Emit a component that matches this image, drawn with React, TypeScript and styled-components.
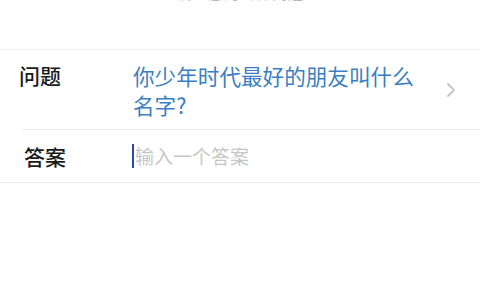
import styled, { createGlobalStyle } from 'styled-components';

const GlobalStyle = createGlobalStyle`
  html, body {
    margin: 0;
    padding: 0;
    background: #ffffff;
    font-family: 'Noto Sans CJK SC', 'Noto Sans', sans-serif;
  }
`;

export default function App() {
  return (
    <Page>
      <GlobalStyle />
      <Header>
        <HeaderText>设置您的密保问题</HeaderText>
      </Header>

      <Form>
        <QuestionRow>
          <Label $indent={19}>问题</Label>
          <QuestionText>你少年时代最好的朋友叫什么名字?</QuestionText>
          <Chevron viewBox="0 0 10 16" width="10" height="16">
            <path d="M2 2 L8 8 L2 14" fill="none" stroke="#c4c4c8" strokeWidth="1.8" strokeLinecap="round" strokeLinejoin="round" />
          </Chevron>
        </QuestionRow>
        <Divider />
        <AnswerRow>
          <Label $indent={24}>答案</Label>
          <AnswerField>
            <Caret />
            <Placeholder>输入一个答案</Placeholder>
          </AnswerField>
        </AnswerRow>
      </Form>
    </Page>
  );
}

const Page = styled.div`
  width: 480px;
  height: 300px;
  overflow: hidden;
  background: #ffffff;
`;

const Header = styled.div`
  height: 49px;
  display: flex;
  justify-content: center;
  overflow: hidden;
  background: #fefefe;
`;

const HeaderText = styled.div`
  margin-top: -17px;
  font-size: 15px;
  line-height: 20px;
  color: #b8b8b8;
  letter-spacing: 1px;
`;

const Form = styled.div`
  border-top: 1px solid #efefef;
  border-bottom: 1px solid #ececec;
`;

const QuestionRow = styled.div`
  height: 79px;
  display: flex;
  align-items: flex-start;
  padding-top: 11px;
  box-sizing: border-box;
`;

const AnswerRow = styled.div`
  height: 52px;
  display: flex;
  align-items: center;
`;

const Label = styled.div<{ $indent: number }>`
  width: ${({ $indent }) => 132 - $indent}px;
  padding-left: ${({ $indent }) => $indent}px;
  flex-shrink: 0;
  font-size: 21px;
  font-weight: 500;
  line-height: 29px;
  color: #1a1a1a;
`;

const QuestionText = styled.div`
  width: 292px;
  margin-left: 1px;
  font-size: 21.6px;
  line-height: 29px;
  color: #3b7fc2;
`;

const Chevron = styled.svg`
  margin-left: auto;
  margin-right: 24px;
  margin-top: 21px;
`;

const Divider = styled.div`
  height: 1px;
  margin-left: 22px;
  background: #ededed;
`;

const AnswerField = styled.div`
  display: flex;
  align-items: center;
  gap: 1px;
`;

const Caret = styled.span`
  width: 2px;
  height: 24px;
  background: #3246a6;
`;

const Placeholder = styled.span`
  font-size: 19px;
  line-height: 26px;
  color: #c6c6c6;
`;
